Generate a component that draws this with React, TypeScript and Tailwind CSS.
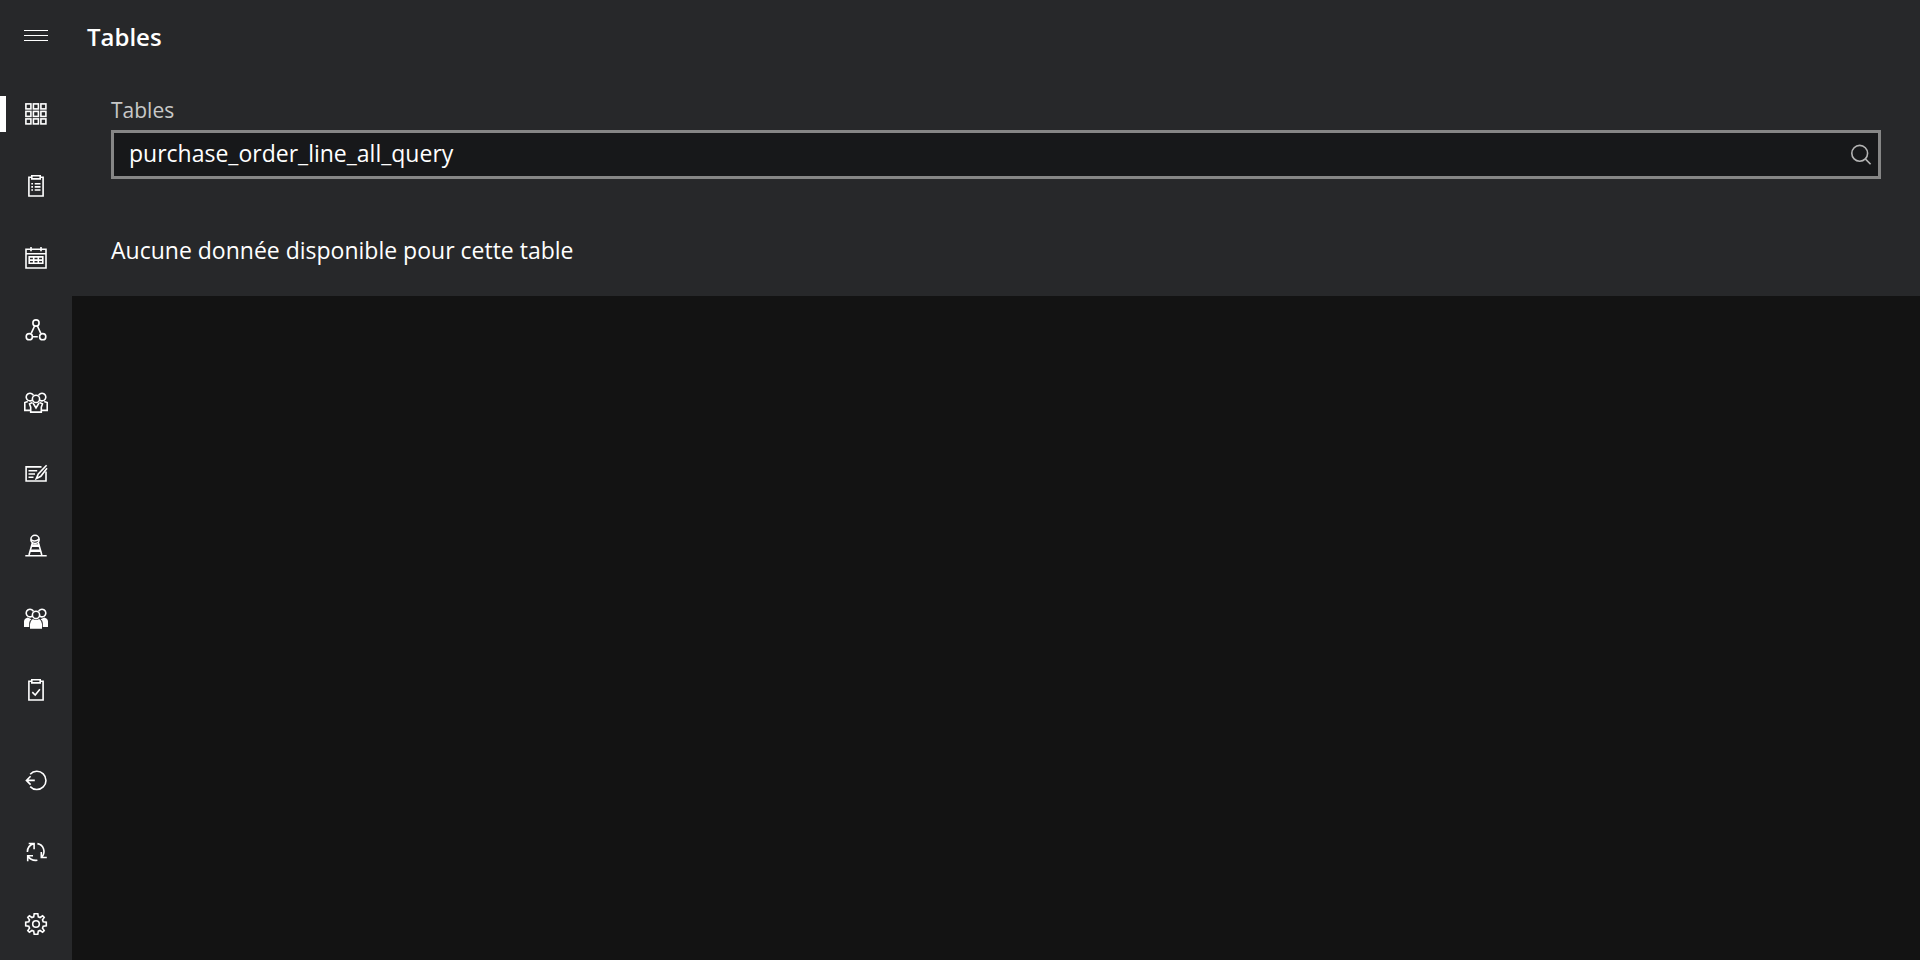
import type { ReactNode } from "react";

type NavItem = {
    name: string;
    icon: ReactNode;
    active?: boolean;
}

const Icon = ({ children }: { children: ReactNode }) => {
    return <svg
        viewBox="0 0 24 24"
        className="w-6 h-6 shrink-0"
        fill="none"
        stroke="currentColor"
        strokeWidth="1.6"
        aria-hidden="true"
    >
        {children}
    </svg>
}

const clipboard = <>
    <path d="M7.5 3.2H4.9V22H19.1V3.2H16.5" />
    <path d="M7.8 1.8H16.2V4.9H7.8Z" />
</>

const heads = <>
    <path d="M8.2 10.2A3.8 3.8 0 1 1 9.4 5.4" />
    <path d="M15.8 10.2A3.8 3.8 0 1 0 14.6 5.4" />
    <circle cx="12" cy="8.9" r="3.6" />
</>

const mainItems: NavItem[] = [
    {
        name: "Tables",
        active: true,
        icon: <>
            {[1.9, 9.4, 16.9].map((y) => [1.9, 9.4, 16.9].map((x) => (
                <rect key={`${x}-${y}`} x={x} y={y} width="5" height="5" />
            )))}
        </>
    },
    {
        name: "Listes",
        icon: <>
            {clipboard}
            <path d="M7.3 9.8H9M7.3 12.9H9M7.3 16H9M10.7 9.8H16.5M10.7 12.9H16.5M10.7 16H16.5" />
        </>
    },
    {
        name: "Calendrier",
        icon: <>
            <path d="M2 3.3H22V22H2ZM2 7.7H22M7 1V5.3M17 1V5.3" />
            <path d="M5.2 10.9H18.8V17.3H5.2ZM5 14.1H19M9.7 10.8V17.5M14.3 10.8V17.5" />
        </>
    },
    {
        name: "Relations",
        icon: <>
            <circle cx="12" cy="5" r="3.1" />
            <circle cx="5.3" cy="18.7" r="3.1" />
            <circle cx="18.7" cy="18.7" r="3.1" />
            <path d="M10.6 8L7.2 15.4M13.4 8L16.8 15.4M8.4 18.7H13.8" />
        </>
    },
    {
        name: "Clients",
        icon: <>
            {heads}
            <path d="M3.8 11.5L.8 12.5V20.4H6.4M20.2 11.5L23.2 12.5V20.4H17.6" />
            <path d="M8.5 12.4L5.5 14L6.7 17.2V22.1H17.3V17.2L18.5 14L15.5 12.4M9 13L12 18L15 13" />
        </>
    },
    {
        name: "Saisie",
        icon: <>
            <path d="M17.5 4.9H2.1V19H22V9.5" />
            <path d="M4.5 8.7H13.2M4.5 12H11M4.5 15.3H9.5" />
            <path d="M22.6 3.3L14.3 12L12.3 16.6L16.8 14.3L23 6.2" />
        </>
    },
    {
        name: "Chantiers",
        icon: <>
            <circle cx="11" cy="5.4" r="4.1" />
            <path d="M7 5.6Q11 8.6 15 5.2M8.6 8.2L5 21M14.2 8.2L17.8 21M1.3 21.7H22.7" />
            <path d="M7.8 10.3H15L15.9 13H7ZM6.5 15.5H16.4L17.3 18H5.7Z" fill="currentColor" stroke="none" />
        </>
    },
    {
        name: "Utilisateurs",
        icon: <>
            {heads}
            <path d="M3.7 11.4Q0 12.5 0 15.5V21H5.2V17Q5.3 14.5 7.5 13.2ZM20.3 11.4Q24 12.5 24 15.5V21H18.8V17Q18.7 14.5 16.5 13.2Z" fill="currentColor" stroke="none" />
            <path d="M8.8 13Q12 14.7 15.2 13Q18 15 18 18V22.7H6V18Q6 15 8.8 13Z" fill="currentColor" stroke="none" />
        </>
    },
    {
        name: "Validations",
        icon: <>
            {clipboard}
            <path d="M8.3 14.2L11.2 17L15.9 11.3" />
        </>
    },
]

const bottomItems: NavItem[] = [
    {
        name: "Déconnexion",
        icon: <>
            <path d="M6.2 6.2A9.1 9.1 0 1 1 6.2 18.6" />
            <path d="M10.8 12.4H2.6M6.6 8.2L2.4 12.4L6.6 16.6" />
        </>
    },
    {
        name: "Synchroniser",
        icon: <>
            <path d="M4.7 3.5H10.1V9.2M10 3.6C6 4.6 3.4 7.8 3.4 12" />
            <path d="M13.4 3.6C19.5 4.6 22 11.6 18 17M17.3 12V17.5H22.8" />
            <path d="M3.7 21.2V15.8H9M3.9 16C5.8 19.1 9 20.9 13.4 20.3" />
        </>
    },
    {
        name: "Paramètres",
        icon: <>
            <circle cx="12" cy="12" r="3.3" />
            <path d="M10.2 1.7H13.8L14.3 4.8L16.1 5.5L18.6 3.8L20.2 5.4L18.5 7.9L19.2 9.7L22.3 10.2V13.8L19.2 14.3L18.5 16.1L20.2 18.6L18.6 20.2L16.1 18.5L14.3 19.2L13.8 22.3H10.2L9.7 19.2L7.9 18.5L5.4 20.2L3.8 18.6L5.5 16.1L4.8 14.3L1.7 13.8V10.2L4.8 9.7L5.5 7.9L3.8 5.4L5.4 3.8L7.9 5.5L9.7 4.8Z" />
        </>
    },
]

const NavLink = ({ name, icon, active }: NavItem) => {
    return <a href="#" aria-label={name} className="flex items-center h-18">
        <span className={active ? "w-[6px] h-9 bg-white" : "w-[6px] h-9"} />
        <span className="flex-1 flex justify-center pr-[6px]">
            <Icon>{icon}</Icon>
        </span>
    </a>
}

const Sidebar = () => {
    return <nav className="w-18 shrink-0 flex flex-col bg-[#27282a]">
        <button type="button" aria-label="Menu" className="h-[78px] pb-[7px] flex items-center justify-center">
            <svg viewBox="0 0 24 24" className="w-6 h-6" fill="currentColor" shapeRendering="crispEdges" aria-hidden="true">
                <path d="M0 6H24V7H0ZM0 11H24V12H0ZM0 16H24V17H0Z" />
            </svg>
        </button>
        {mainItems.map((item) => <NavLink key={item.name} {...item} />)}
        <div className="mt-auto">
            {bottomItems.map((item) => <NavLink key={item.name} {...item} />)}
        </div>
    </nav>
}

const App = () => {
    return <div className="min-h-screen flex bg-[#131313] text-white font-['Open_Sans','Noto_Sans',sans-serif]">
        <Sidebar />
        <main className="flex-1">
            <div className="bg-[#27282a] pb-7">
                <h1 className="pl-[15px] pt-[19px] text-[24px] leading-9 font-semibold">Tables</h1>

                <div className="px-[39px] pt-[41px]">
                    <label htmlFor="table-search" className="block text-[21px] leading-7 pb-[6px] text-[#c8c8c8]">
                        Tables
                    </label>
                    <div className="flex items-center h-[49px] border-3 border-[#868686] bg-[#17181a]">
                        <input
                            id="table-search"
                            type="text"
                            defaultValue="purchase_order_line_all_query"
                            className="flex-1 h-full pl-[15px] pb-1 text-[23px] bg-transparent outline-none"
                        />
                        <button type="button" aria-label="Rechercher" className="px-[3px] pb-[2px] text-[#b4b4b4]">
                            <Icon>
                                <circle cx="8.7" cy="11.3" r="7.9" />
                                <path d="M14.3 16.9L19.6 22.2" />
                            </Icon>
                        </button>
                    </div>

                    <p className="pt-[53px] text-[23px] leading-9">Aucune donnée disponible pour cette table</p>
                </div>
            </div>
        </main>
    </div>
}

export default App
